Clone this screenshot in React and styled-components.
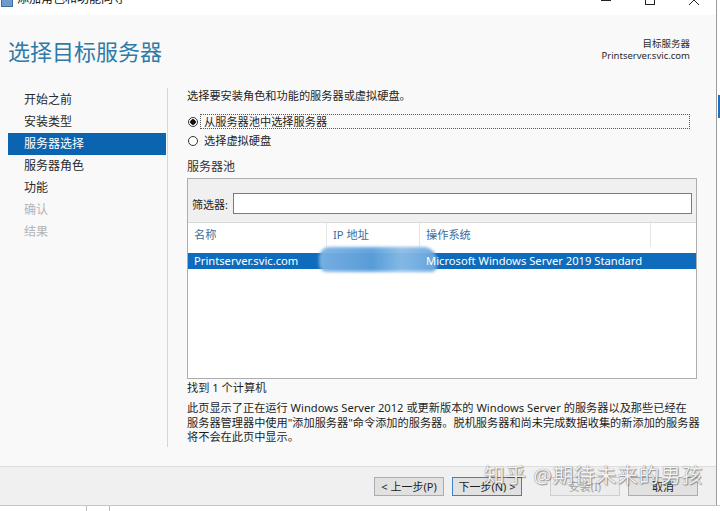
import React from 'react';
import styled, { createGlobalStyle } from 'styled-components';

const GlobalStyle = createGlobalStyle`
  html, body {
    margin: 0;
    padding: 0;
    background: #fff;
    overflow: hidden;
  }
  body {
    font-family: "Noto Sans", "Noto Sans CJK SC", sans-serif;
    color: #1e1e1e;
  }
`;

const NAV = [
  { label: '开始之前' },
  { label: '安装类型' },
  { label: '服务器选择', active: true },
  { label: '服务器角色' },
  { label: '功能' },
  { label: '确认', disabled: true },
  { label: '结果', disabled: true },
];

export default function App() {
  return (
    <Screen>
      <GlobalStyle />
      <Desk>
        <Win>
          <TitleBar>
            <TitleIcon viewBox="0 0 12 10">
              <rect x="0.5" y="2.5" width="11" height="7" fill="#6d9ccc" stroke="#3f6d9e" />
              <rect x="2" y="0" width="8" height="3" fill="#9bbde0" />
            </TitleIcon>
            <TitleText>添加角色和功能向导</TitleText>
            <Controls>
              <Ctrl>
                <svg width="10" height="10" viewBox="0 0 10 10">
                  <line x1="0" y1="5.5" x2="10" y2="5.5" stroke="#222" />
                </svg>
              </Ctrl>
              <Ctrl>
                <svg width="10" height="10" viewBox="0 0 10 10">
                  <rect x="0.5" y="0.5" width="9" height="9" fill="none" stroke="#222" />
                </svg>
              </Ctrl>
              <Ctrl>
                <svg width="10" height="10" viewBox="0 0 10 10">
                  <path d="M0 0 L10 10 M10 0 L0 10" stroke="#222" />
                </svg>
              </Ctrl>
            </Controls>
          </TitleBar>

          <Header>
            <PageTitle>选择目标服务器</PageTitle>
            <Target>
              <div>目标服务器</div>
              <div>Printserver.svic.com</div>
            </Target>
          </Header>

          <Body>
            <Nav>
              {NAV.map((n) => (
                <NavItem key={n.label} $active={n.active} $disabled={n.disabled}>
                  {n.label}
                </NavItem>
              ))}
            </Nav>
            <NavDivider />
            <Content>
              <Intro>选择要安装角色和功能的服务器或虚拟硬盘。</Intro>
              <RadioRow $first>
                <Radio $checked />
                <RadioLabel $focused>从服务器池中选择服务器</RadioLabel>
              </RadioRow>
              <RadioRow>
                <Radio />
                <RadioLabel>选择虚拟硬盘</RadioLabel>
              </RadioRow>

              <PoolLabel>服务器池</PoolLabel>
              <PoolBox>
                <FilterArea>
                  <FilterLabel>筛选器:</FilterLabel>
                  <FilterInput />
                </FilterArea>
                <ListHead>
                  <HeadCell $w={139}>名称</HeadCell>
                  <HeadCell $w={93}>IP 地址</HeadCell>
                  <HeadCell $w={231}>操作系统</HeadCell>
                  <HeadCell $last />
                </ListHead>
                <ListBody>
                  <Row>
                    <Cell $w={139}>Printserver.svic.com</Cell>
                    <Cell $w={93}>
                      <Smudge />
                    </Cell>
                    <Cell $w={231}>Microsoft Windows Server 2019 Standard</Cell>
                  </Row>
                </ListBody>
              </PoolBox>
              <Found>找到 1 个计算机</Found>
              <Note>
                此页显示了正在运行 Windows Server 2012 或更新版本的 Windows Server 的服务器以及那些已经在
                <br />
                服务器管理器中使用"添加服务器"命令添加的服务器。脱机服务器和尚未完成数据收集的新添加的服务器
                <br />
                将不会在此页中显示。
              </Note>
            </Content>
          </Body>

          <Footer>
            <Btn>&lt; 上一步(P)</Btn>
            <Btn $gap={8} $focus>下一步(N) &gt;</Btn>
            <Btn $gap={28} $disabled>安装(I)</Btn>
            <Btn $gap={8}>取消</Btn>
          </Footer>
        </Win>
        <Edge>
          <EdgeMark />
        </Edge>
      </Desk>
      <BottomStrip>
        <Tick $left={86} />
        <Tick $left={109} />
      </BottomStrip>
      <Watermark>知乎 @期待未来的男孩</Watermark>
    </Screen>
  );
}

const Screen = styled.div`
  position: relative;
  width: 720px;
  height: 511px;
  overflow: hidden;
  display: flex;
  flex-direction: column;
  background: #fff;
`;

const Desk = styled.div`
  display: flex;
  height: 505px;
`;

const Win = styled.div`
  width: 716px;
  flex-shrink: 0;
  border-right: 1px solid #9c9c9c;
  display: flex;
  flex-direction: column;
`;

const Edge = styled.div`
  flex: 1;
  background: #fff;
  padding-top: 95px;
`;

const EdgeMark = styled.div`
  height: 23px;
  margin-left: 1px;
  background: #1f6fbf;
`;

const TitleBar = styled.div`
  height: 15px;
  flex-shrink: 0;
  background: #fff;
  display: flex;
  align-items: flex-start;
  overflow: hidden;
`;

const TitleIcon = styled.svg`
  width: 12px;
  height: 10px;
  margin-top: -3px;
  margin-left: 1px;
`;

const TitleText = styled.div`
  font-size: 12px;
  line-height: 16px;
  margin-top: -9px;
  margin-left: 4px;
  color: #111;
`;

const Controls = styled.div`
  margin-left: auto;
  display: flex;
`;

const Ctrl = styled.div`
  width: 44px;
  display: flex;
  justify-content: center;
  margin-top: -5px;
`;

const Header = styled.div`
  height: 65px;
  flex-shrink: 0;
  background: #f9f9f9;
  display: flex;
  justify-content: space-between;
  align-items: flex-start;
  padding: 0 26px 0 8px;
`;

const PageTitle = styled.div`
  margin-top: 23px;
  font-size: 22px;
  line-height: 26px;
  color: #2f7aa8;
`;

const Target = styled.div`
  margin-top: 23px;
  text-align: right;
  font-size: 9.5px;
  line-height: 12px;
  color: #2a2a2a;
`;

const Body = styled.div`
  flex: 1;
  display: flex;
  background: #f9f9f9;
`;

const Nav = styled.div`
  width: 167px;
  flex-shrink: 0;
  padding-top: 9px;
  box-sizing: border-box;
`;

const NavItem = styled.div`
  height: 22px;
  line-height: 22px;
  margin-left: 8px;
  padding-left: 16px;
  width: 158px;
  box-sizing: border-box;
  font-size: 12px;
  background: ${(p) => (p.$active ? '#0b64b0' : 'transparent')};
  color: ${(p) => (p.$active ? '#fff' : p.$disabled ? '#b4b4b4' : '#2a2a2a')};
`;

const NavDivider = styled.div`
  width: 1px;
  flex-shrink: 0;
  margin: 8px 0 19px;
  background: #d6d6d6;
`;

const Content = styled.div`
  flex: 1;
  min-width: 0;
  display: flex;
  flex-direction: column;
  padding: 0 19px 0 19px;
  font-size: 11.2px;
`;

const Intro = styled.div`
  margin-top: 8px;
  line-height: 16px;
`;

const RadioRow = styled.div`
  display: flex;
  align-items: center;
  height: 19px;
  margin-top: ${(p) => (p.$first ? '8px' : '0')};
`;

const Radio = styled.span`
  width: 10px;
  height: 10px;
  flex-shrink: 0;
  box-sizing: border-box;
  border-radius: 50%;
  border: 1px solid #333;
  margin-left: 1px;
  margin-right: 2px;
  background: ${(p) => (p.$checked ? 'radial-gradient(circle, #111 0 2.5px, #fff 3px)' : '#fff')};
`;

const RadioLabel = styled.span`
  flex: ${(p) => (p.$focused ? 1 : 'none')};
  padding-left: 3px;
  margin-right: 7px;
  line-height: 13px;
  border: 1px dotted ${(p) => (p.$focused ? '#555' : 'transparent')};
`;

const PoolLabel = styled.div`
  margin-top: 9px;
  font-size: 12px;
  line-height: 16px;
  color: #333;
`;

const PoolBox = styled.div`
  margin-top: 3px;
  height: 199px;
  border: 1px solid #adadad;
  display: flex;
  flex-direction: column;
  background: #fff;
`;

const FilterArea = styled.div`
  display: flex;
  align-items: center;
  padding: 14px 4px 8px 4px;
  background: #f0f0f0;
  border-bottom: 1px solid #d9d9d9;
`;

const FilterLabel = styled.span`
  width: 41px;
  flex-shrink: 0;
  font-size: 11px;
`;

const FilterInput = styled.div`
  flex: 1;
  height: 21px;
  box-sizing: border-box;
  border: 1px solid #7a7a7a;
  background: #fff;
`;

const ListHead = styled.div`
  display: flex;
  height: 24px;
  background: #fff;
`;

const HeadCell = styled.div`
  width: ${(p) => (p.$w ? `${p.$w}px` : 'auto')};
  flex: ${(p) => (p.$last ? 1 : 'none')};
  box-sizing: border-box;
  padding-left: 6px;
  line-height: 24px;
  color: #3a6c9c;
  border-right: ${(p) => (p.$last ? 'none' : '1px solid #e5e5e5')};
`;

const ListBody = styled.div`
  flex: 1;
  padding-top: 6px;
  background: #fff;
`;

const Row = styled.div`
  display: flex;
  height: 16px;
  background: #0f6cbd;
  color: #fff;
`;

const Cell = styled.div`
  position: relative;
  width: ${(p) => p.$w}px;
  flex-shrink: 0;
  box-sizing: border-box;
  padding-left: 6px;
  line-height: 16px;
  white-space: nowrap;
`;

const Smudge = styled.span`
  position: absolute;
  left: -8px;
  top: -6px;
  width: 118px;
  height: 25px;
  border-radius: 10px 14px 6px 8px;
  background: linear-gradient(90deg, #7db3e2, #5c9fda 45%, #8bbde6 70%, #6aa6dc);
  filter: blur(1.5px);
  opacity: 0.95;
`;

const Found = styled.div`
  margin-top: 1px;
  line-height: 16px;
`;

const Note = styled.div`
  margin-top: 5px;
  line-height: 14.5px;
  white-space: nowrap;
`;

const Footer = styled.div`
  height: 39px;
  flex-shrink: 0;
  box-sizing: border-box;
  border-top: 1px solid #dedede;
  background: #f0f0f0;
  display: flex;
  align-items: center;
  justify-content: flex-end;
  padding-right: 18px;
`;

const Btn = styled.div`
  width: 70px;
  height: 19px;
  box-sizing: border-box;
  margin-left: ${(p) => p.$gap || 0}px;
  border: 1px solid ${(p) => (p.$focus ? '#3b82c6' : p.$disabled ? '#cfcfcf' : '#adadad')};
  background: ${(p) => (p.$disabled ? '#ececec' : '#e1e1e1')};
  color: ${(p) => (p.$disabled ? '#a0a0a0' : '#1e1e1e')};
  font-size: 11px;
  line-height: 17px;
  text-align: center;
`;

const BottomStrip = styled.div`
  position: relative;
  flex: 1;
  border-top: 1px solid #c6c6c6;
  background: #fff;
`;

const Tick = styled.span`
  position: absolute;
  left: ${(p) => p.$left}px;
  top: 0;
  width: 1px;
  height: 5px;
  background: #bdbdbd;
`;

const Watermark = styled.div`
  position: absolute;
  left: 484px;
  top: 462px;
  font-size: 20.5px;
  line-height: 26px;
  letter-spacing: 1px;
  color: rgba(255, 255, 255, 0.92);
  text-shadow: 0 0 1px #666, 1px 1px 1px rgba(0, 0, 0, 0.35);
  white-space: nowrap;
`;
